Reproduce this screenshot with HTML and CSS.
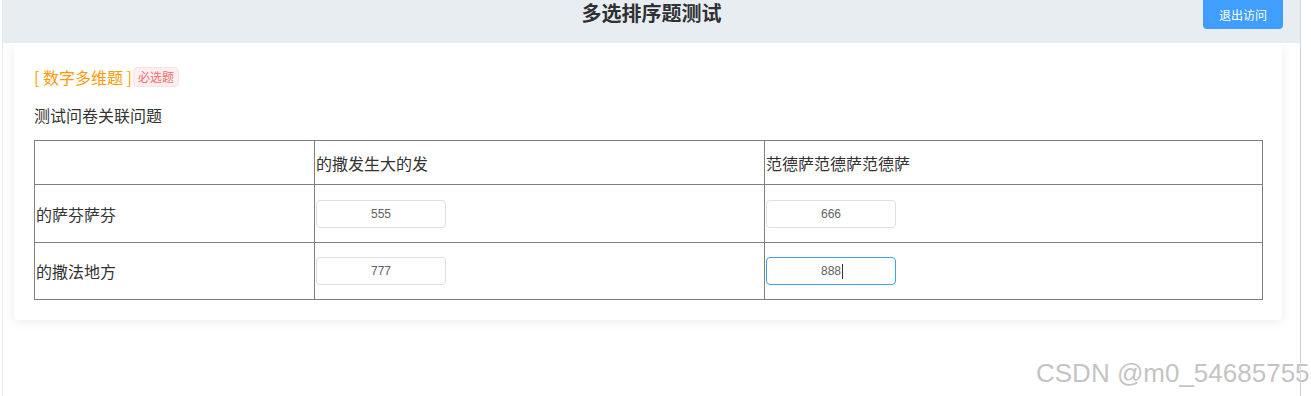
FILE: index.html
```html
<!DOCTYPE html>
<html lang="zh-CN">
<head>
<meta charset="utf-8">
<title>多选排序题测试</title>
<link rel="stylesheet" href="styles.css">
</head>
<body>
<div class="page">
  <header class="topbar">
    <h1 class="title">多选排序题测试</h1>
    <button class="btn-exit" type="button">退出访问</button>
  </header>
  <main class="card">
    <div class="q-head">
      <span class="q-type">[ 数字多维题 ]</span>
      <span class="q-tag">必选题</span>
    </div>
    <p class="q-title">测试问卷关联问题</p>
    <table class="grid">
      <colgroup>
        <col class="c1"><col class="c2"><col class="c3">
      </colgroup>
      <tr class="r-head">
        <td></td>
        <td>的撒发生大的发</td>
        <td>范德萨范德萨范德萨</td>
      </tr>
      <tr class="r1">
        <td>的萨芬萨芬</td>
        <td><input class="num" type="text" value="555"></td>
        <td><input class="num" type="text" value="666"></td>
      </tr>
      <tr class="r2">
        <td>的撒法地方</td>
        <td><input class="num" type="text" value="777"></td>
        <td><span class="field"><input class="num is-focus" type="text" value="888"><span class="caret"></span></span></td>
      </tr>
    </table>
  </main>
</div>
<div class="watermark">CSDN @m0_54685755</div>
</body>
</html>
```

FILE: styles.css
```css
html, body {
  margin: 0;
  padding: 0;
  background: #fff;
}
body {
  position: relative;
  width: 1311px;
  height: 396px;
  overflow: hidden;
  font-family: "Noto Sans CJK SC", "Microsoft YaHei", sans-serif;
  color: #333;
}
.page {
  margin-left: 2px;
  width: 1299px;
  height: 396px;
  box-sizing: border-box;
  border-left: 1px solid #e6ebf2;
  border-right: 1px solid #cdd6e6;
  background: #fff;
}
.topbar {
  position: relative;
  height: 43px;
  background: #e8edf2;
  display: flex;
  justify-content: center;
}
.title {
  margin: 0;
  font-size: 20px;
  font-weight: bold;
  line-height: 26px;
  color: #303133;
}
.btn-exit {
  position: absolute;
  top: 0;
  right: 17px;
  width: 80px;
  height: 29px;
  padding: 0;
  border: none;
  border-radius: 0 0 4px 4px;
  background: #409eff;
  color: #fff;
  font-family: inherit;
  font-size: 12px;
  line-height: 29px;
}
.card {
  display: block;
  margin: 0 18px 0 11px;
  padding: 24px 20px 20px;
  background: #fff;
  border-radius: 4px;
  box-shadow: 0 2px 12px 0 rgba(0, 0, 0, 0.08);
}
.q-head {
  display: flex;
  align-items: center;
  height: 20px;
}
.q-type {
  font-size: 16px;
  line-height: 20px;
  color: #ff9900;
}
.q-tag {
  margin-left: 1px;
  height: 20px;
  box-sizing: border-box;
  padding: 0 4px;
  font-size: 12px;
  line-height: 18px;
  color: #f56c6c;
  background: #fef0f0;
  border: 1px solid #fde2e2;
  border-radius: 4px;
}
.q-title {
  margin: 16px 0 13px;
  font-size: 16px;
  line-height: 24px;
  color: #333;
}
.grid {
  width: 1228px;
  table-layout: fixed;
  border-collapse: collapse;
  font-size: 16px;
  color: #333;
}
.grid .c1 { width: 280px; }
.grid .c2 { width: 450px; }
.grid .c3 { width: 498px; }
.grid td {
  border: 1px solid #808080;
  padding: 0 1px;
  vertical-align: middle;
  text-align: left;
}
.r-head { height: 44px; }
.r1 { height: 58px; }
.r2 { height: 57px; }
.num {
  display: block;
  width: 130px;
  height: 28px;
  box-sizing: border-box;
  padding: 0 10px;
  border: 1px solid #dcdfe6;
  border-radius: 4px;
  background: #fff;
  text-align: center;
  font-family: "Liberation Sans", Arial, sans-serif;
  font-size: 12px;
  color: #606266;
  outline: none;
}
.num.is-focus {
  border-color: #409eff;
}
.field {
  position: relative;
  display: block;
  width: 130px;
}
.caret {
  position: absolute;
  left: 76px;
  top: 7px;
  width: 1px;
  height: 15px;
  background: #333;
}
.watermark {
  position: absolute;
  left: 1036px;
  top: 358px;
  font-family: "Liberation Sans", Arial, sans-serif;
  font-size: 26px;
  color: #c4c4c4;
  text-shadow: 0 0 1px #fff, 0 0 2px #fff;
  white-space: nowrap;
}
```
